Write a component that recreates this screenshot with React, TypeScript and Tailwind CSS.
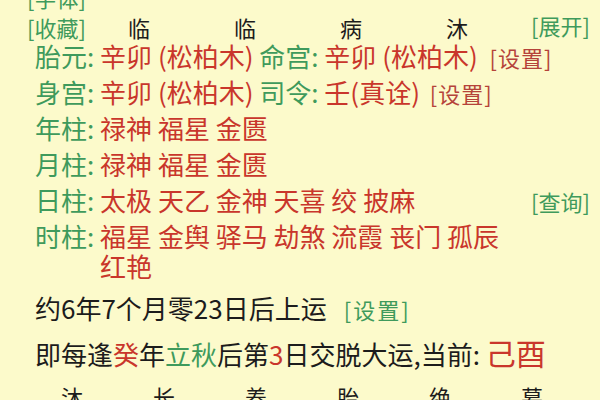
const FONT = "font-['Noto_Sans_CJK_SC','Noto_Sans',sans-serif]"

function Label({ children }: { children: React.ReactNode }) {
  return <span className="text-[#3f9a5c]">{children}</span>
}

function Red({ children }: { children: React.ReactNode }) {
  return <span className="text-[#c9362b]">{children}</span>
}

function Link({ children, green }: { children: React.ReactNode; green?: boolean }) {
  return (
    <span className={`text-[22px] leading-none ${green ? 'text-[#3f9a5c]' : 'text-[#b5433a]'}`}>[{children}]</span>
  )
}

const TOP = ['临', '临', '病', '沐']
const BOTTOM = ['沐', '长', '养', '胎', '绝', '墓']

export default function App() {
  return (
    <div className={`w-[600px] h-[400px] overflow-hidden bg-[#fcfacb] text-[#1c1c1c] ${FONT}`}>
      <div className="flex flex-col">
        <div className="h-[30px] -mt-[18px] pl-[27px] flex items-center">
          <Link green>字体</Link>
        </div>

        <div className="h-[30px] pl-[27px] pr-[10px] flex items-center">
          <Link green>收藏</Link>
          {TOP.map((c, i) => (
            <span key={i} className="w-[106px] text-center text-[22px]">{c}</span>
          ))}
          <span className="ml-auto"><Link green>展开</Link></span>
        </div>

        <div className="-mt-[4px] pl-[35px] pr-[10px] text-[26px] leading-[30px]">
          <p className="py-[3px] whitespace-nowrap">
            <Label>胎元:</Label> <Red>辛卯 (松柏木)</Red> <Label>命宫:</Label> <Red>辛卯 (松柏木)</Red>{' '}
            <span className="ml-[6px] tracking-[1px]"><Link>设置</Link></span>
          </p>
          <p className="py-[3px] whitespace-nowrap">
            <Label>身宫:</Label> <Red>辛卯 (松柏木)</Red> <Label>司令:</Label> <Red>壬(真诠)</Red>{' '}
            <span className="ml-[4px] tracking-[1px]"><Link>设置</Link></span>
          </p>
          <p className="py-[3px]">
            <Label>年柱:</Label> <Red>禄神 福星 金匮</Red>
          </p>
          <p className="py-[3px]">
            <Label>月柱:</Label> <Red>禄神 福星 金匮</Red>
          </p>
          <p className="py-[3px] flex">
            <span>
              <Label>日柱:</Label> <Red>太极 天乙 金神 天喜 绞 披麻</Red>
            </span>
            <span className="ml-auto"><Link green>查询</Link></span>
          </p>
          <div className="py-[3px] flex">
            <Label>时柱:&nbsp;</Label>
            <p className="w-[420px]">
              <Red>福星 金舆 驿马 劫煞 流霞 丧门 孤辰 红艳</Red>
            </p>
          </div>

          <p className="mt-[9px] whitespace-nowrap">
            约6年7个月零23日后上运
            <span className="ml-[17px] tracking-[2px]"><Link green>设置</Link></span>
          </p>
          <p className="mt-[14px] whitespace-nowrap">
            即每逢<Red>癸</Red>年<Label>立秋</Label>后第<Red>3</Red>日交脱大运,当前:{' '}
            <span className="text-[30px] leading-none text-[#c9362b]">己酉</span>
          </p>
        </div>

        <div className="mt-[12px] pl-[26px] flex text-[22px] leading-[30px]">
          {BOTTOM.map((c, i) => (
            <span key={i} className="w-[92px] text-center">{c}</span>
          ))}
        </div>
      </div>
    </div>
  )
}
